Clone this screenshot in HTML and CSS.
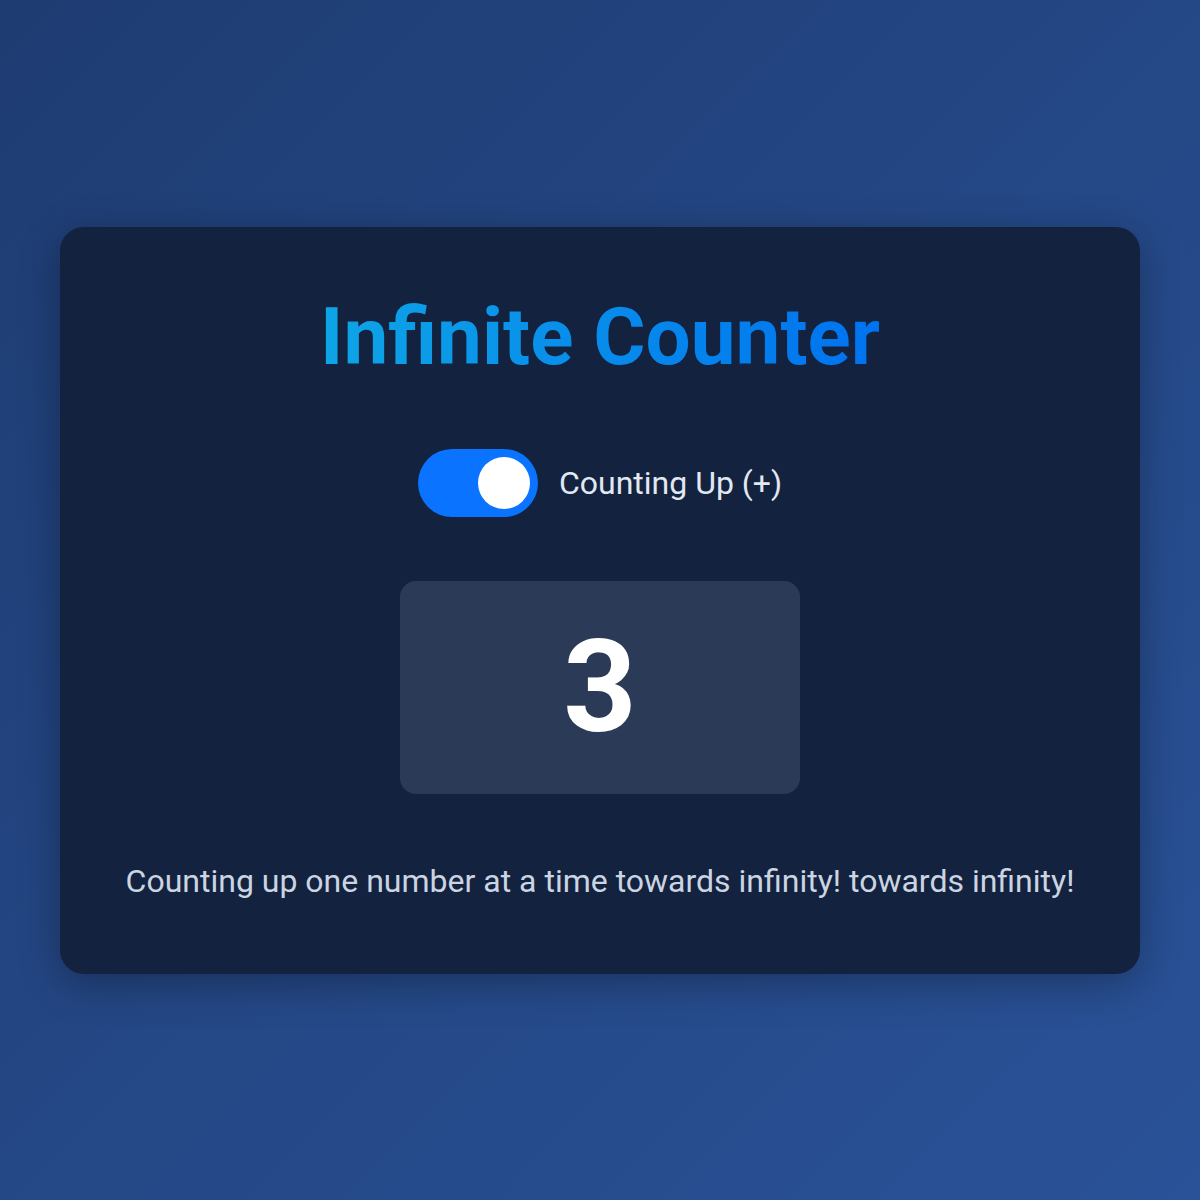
FILE: index.html
```html
<!DOCTYPE html>
<html lang="en">
<head>
<meta charset="utf-8">
<title>Infinite Counter</title>
<link rel="stylesheet" href="styles.css">
</head>
<body>
<main class="page">
  <section class="card">
    <h1 class="title">Infinite Counter</h1>
    <div class="mode">
      <span class="toggle"><span class="knob"></span></span>
      <span class="mode-label">Counting Up (+)</span>
    </div>
    <div class="counter">3</div>
    <p class="desc">Counting up one number at a time towards infinity! towards infinity!</p>
  </section>
</main>
</body>
</html>
```
FILE: styles.css
```css
html, body {
  margin: 0;
  padding: 0;
  height: 100%;
}
body {
  font-family: Roboto, "Liberation Sans", sans-serif;
  background: linear-gradient(135deg, #1e3c72 0%, #2a5298 100%);
  min-height: 1200px;
}
.page {
  height: 1200px;
  display: flex;
  align-items: center;
  justify-content: center;
}
.card {
  box-sizing: border-box;
  width: 1080px;
  background: #13223f;
  border-radius: 24px;
  box-shadow: 0 10px 40px rgba(0, 0, 0, 0.3);
  padding: 62px 40px 70px;
  display: flex;
  flex-direction: column;
  align-items: center;
}
.title {
  margin: 0;
  font-size: 80px;
  line-height: 96px;
  font-weight: 700;
  background: linear-gradient(90deg, #0ea5e6 0%, #0072f0 100%);
  -webkit-background-clip: text;
  background-clip: text;
  color: transparent;
}
.mode {
  margin-top: 64px;
  display: flex;
  align-items: center;
  gap: 21px;
}
.toggle {
  box-sizing: border-box;
  width: 120px;
  height: 68px;
  border-radius: 34px;
  background: #0a73ff;
  padding: 8px;
  display: flex;
  justify-content: flex-end;
}
.knob {
  width: 52px;
  height: 52px;
  border-radius: 50%;
  background: #ffffff;
}
.mode-label {
  font-size: 32px;
  color: #e2e8f0;
}
.counter {
  margin-top: 64px;
  width: 400px;
  height: 213px;
  border-radius: 16px;
  background: #2b3a56;
  display: flex;
  align-items: center;
  justify-content: center;
  font-size: 128px;
  font-weight: 700;
  color: #ffffff;
}
.desc {
  margin: 65px 0 0;
  font-size: 32px;
  line-height: 45px;
  color: #cbd5e1;
}
```
